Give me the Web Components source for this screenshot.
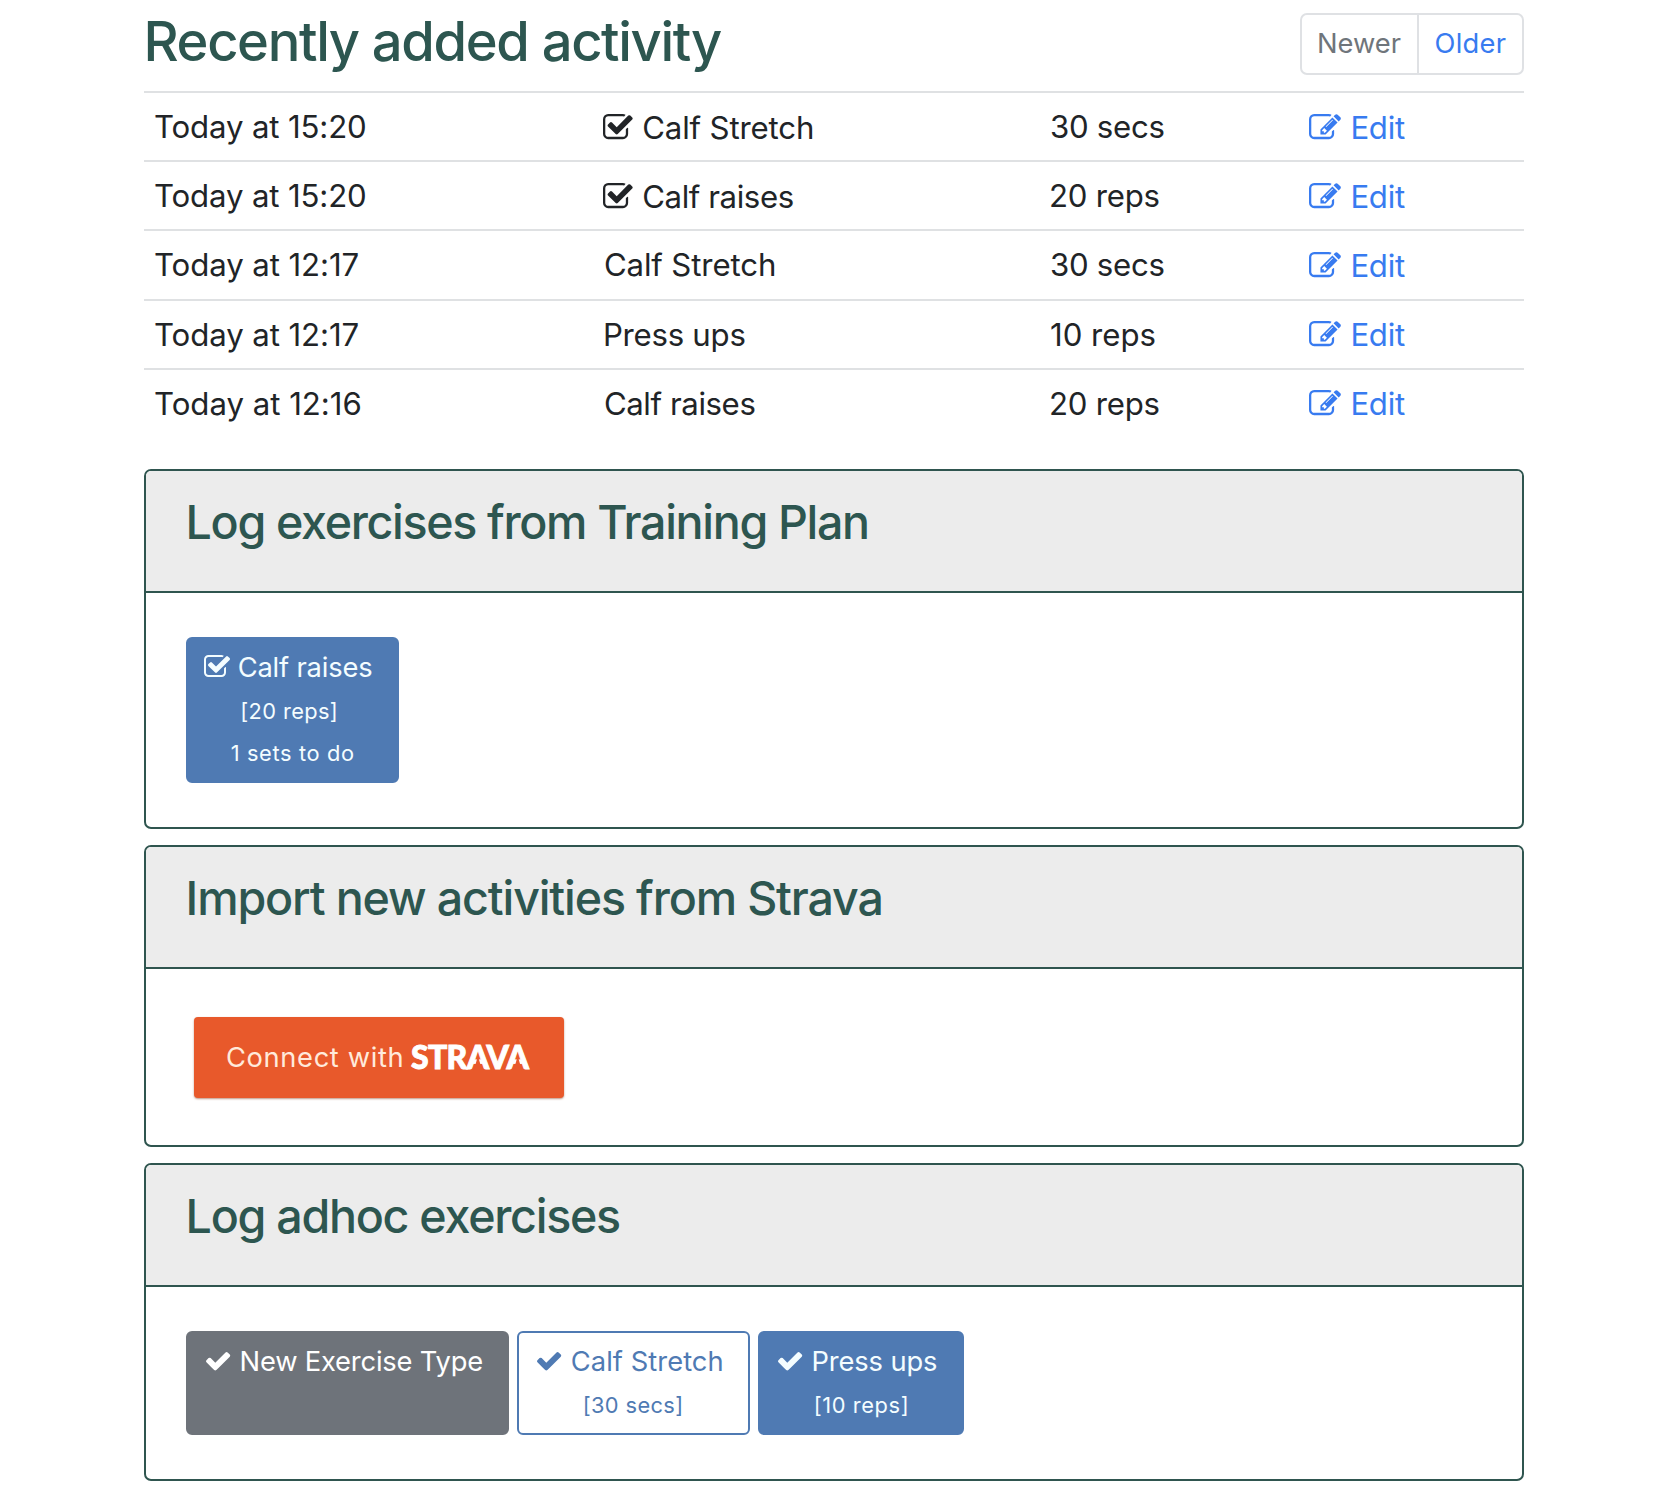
<!DOCTYPE html>
<html lang="en">
<head>
<meta charset="utf-8">
<title>Activity log</title>
<style>
  html, body { margin: 0; background: #fff; }
  body { font-family: Inter, "Liberation Sans", sans-serif; color: #212427; }
</style>
</head>
<body>
<activity-page></activity-page>

<script>
const pen = document.createElement('canvas').getContext('2d');

/* A single line of text tracked so that its ink spans a given width. */
class TrackedText extends HTMLElement {
  constructor() {
    super();
    this.attachShadow({ mode: 'open' }).innerHTML = `<style>:host { display: inline-block; white-space: nowrap; flex: none; } span { display: inline-block; }</style><span></span>`;
  }
  connectedCallback() {
    const text = this.getAttribute('text');
    const span = this.shadowRoot.querySelector('span');
    span.textContent = text;
    const cs = getComputedStyle(this);
    pen.font = `${cs.fontWeight} ${cs.fontSize} ${cs.fontFamily}`;
    const m = pen.measureText(text);
    const ink = m.actualBoundingBoxRight + m.actualBoundingBoxLeft;
    const w = parseFloat(this.getAttribute('ink'));
    this.style.width = w + 'px';
    span.style.letterSpacing = ((w - ink) / (text.length - 1)).toFixed(3) + 'px';
    span.style.marginLeft = m.actualBoundingBoxLeft.toFixed(2) + 'px';
  }
}

const ICONS = {
  'check-square': { box: [64, 128, 1664, 1408], d: 'M1472 930v318q0 119-84.5 203.5t-203.5 84.5h-832q-119 0-203.5-84.5t-84.5-203.5v-832q0-119 84.5-203.5t203.5-84.5h832q63 0 117 25 15 7 18 23 3 17-9 29l-49 49q-10 10-23 10-3 0-9-2-23-6-45-6h-832q-66 0-113 47t-47 113v832q0 66 47 113t113 47h832q66 0 113-47t47-113v-254q0-13 9-22l64-64q10-10 23-10 6 0 12 3 20 8 20 29zm231-489l-814 814q-24 24-57 24t-57-24l-430-430q-24-24-24-57t24-57l110-110q24-24 57-24t57 24l263 263 647-647q24-24 57-24t57 24l110 110q24 24 24 57t-24 57z' },
  'edit': { box: [0, 128, 1792, 1408], d: 'M888 1184l116-116-152-152-116 116v56h96v96h56zm440-720q-16-16-33 1l-350 350q-17 17-1 33t33-1l350-350q17-17 1-33zm80 594v190q0 119-84.5 203.5t-203.5 84.5h-832q-119 0-203.5-84.5t-84.5-203.5v-832q0-119 84.5-203.5t203.5-84.5h832q63 0 117 25 15 7 18 23 3 17-9 29l-49 49q-14 14-32 8-23-6-45-6h-832q-66 0-113 47t-47 113v832q0 66 47 113t113 47h832q66 0 113-47t47-113v-126q0-13 9-22l64-64q15-15 35-7t20 29zm-96-738l288 288-672 672h-288v-288zm444 132l-92 92-288-288 92-92q28-28 68-28t68 28l152 152q28 28 28 68t-28 68z' },
  'check': { box: [121, 334, 1550, 1202], d: 'M1671 566q0 40-28 68l-724 724-136 136q-28 28-68 28t-68-28l-136-136-362-362q-28-28-28-68t28-68l136-136q28-28 68-28t68 28l294 295 656-657q28-28 68-28t68 28l136 136q28 28 28 68z' }
};

class GlyphIcon extends HTMLElement {
  constructor() { super(); this.attachShadow({ mode: 'open' }); }
  connectedCallback() {
    const { box, d } = ICONS[this.getAttribute('name')];
    const k = parseFloat(this.getAttribute('em')) / 1792;
    this.shadowRoot.innerHTML = `
      <style>:host { display: inline-block; flex: none; } svg { display: inline-block; vertical-align: baseline; fill: currentColor; overflow: visible; }</style>
      <svg viewBox="${box.join(' ')}" width="${(box[2] * k).toFixed(2)}" height="${(box[3] * k).toFixed(2)}" aria-hidden="true"><path d="${d}"/></svg>`;
  }
}

class PagerNav extends HTMLElement {
  constructor() {
    super();
    this.attachShadow({ mode: 'open' }).innerHTML = `
      <style>
        :host { display: flex; box-sizing: border-box; width: 224px; height: 62px; border: 2px solid #dfe1e4; border-radius: 7px;
                font-size: 27.3px; line-height: 57px; }
        .p { box-sizing: border-box; padding-left: 17px; }
        .newer { width: 115px; color: #6f757b; }
        .older { flex: 1; color: #387bf0; border-left: 2px solid #dfe1e4; padding-left: 16.5px; }
      </style>
      <div class="p newer"><tracked-text text="Newer" ink="81.8"></tracked-text></div>
      <div class="p older"><tracked-text text="Older" ink="70.3"></tracked-text></div>`;
  }
}

class ActivityRow extends HTMLElement {
  constructor() { super(); this.attachShadow({ mode: 'open' }); }
  connectedCallback() {
    const a = n => this.getAttribute(n);
    const done = this.hasAttribute('done');
    this.shadowRoot.innerHTML = `
      <style>
        :host { display: grid; grid-template-columns: 449.5px 446.5px 259.5px 1fr; box-sizing: border-box; height: 69.25px;
                border-top: 2px solid #dfe1e3; font-size: 31.2px; line-height: 68.4px; }
        .c { display: flex; align-items: baseline; padding-left: 11px; height: 67px; box-sizing: border-box; }
        .low { padding-top: 1px; }
        :host(:nth-of-type(n+4)) .low { padding-top: 0; }
        .gap { gap: 10.2px; }
        .link { color: #387bf0; padding-left: 9.3px; gap: 11.6px; }
      </style>
      <div class="c"><tracked-text text="${a('when')}" ink="${a('wi')}"></tracked-text></div>
      <div class="c gap ${done ? 'low' : ''}" style="padding-left:${done ? 9.8 : 11.4}px">${done ? '<glyph-icon name="check-square" em="32"></glyph-icon>' : ''}<tracked-text text="${a('name')}" ink="${a('ni')}"></tracked-text></div>
      <div class="c"><tracked-text text="${a('amount')}" ink="${a('ai')}"></tracked-text></div>
      <div class="c link low"><glyph-icon name="edit" em="32"></glyph-icon><tracked-text text="Edit" ink="52.5"></tracked-text></div>`;
  }
}

class PanelCard extends HTMLElement {
  constructor() { super(); this.attachShadow({ mode: 'open' }); }
  connectedCallback() {
    this.shadowRoot.innerHTML = `
      <style>
        :host { display: flex; flex-direction: column; box-sizing: border-box; border: 2px solid #2f554f; border-radius: 7px; overflow: hidden; }
        header { box-sizing: border-box; height: 122px; background: #ececec; border-bottom: 2px solid #2f554f; padding-left: 42.6px;
                 color: #2d5650; font-size: 46.6px; font-weight: 500; line-height: 102.6px; }
        .body { flex: 1; display: flex; align-items: flex-start; gap: 8px; padding: 44px 40px; }
      </style>
      <header><tracked-text text="${this.getAttribute('heading')}" ink="${this.getAttribute('hi')}"></tracked-text></header>
      <div class="body"><slot></slot></div>`;
  }
}

class ExerciseButton extends HTMLElement {
  constructor() { super(); this.attachShadow({ mode: 'open' }); }
  connectedCallback() {
    const a = n => this.getAttribute(n);
    this.shadowRoot.innerHTML = `
      <style>
        :host { display: flex; flex-direction: column; box-sizing: border-box; padding-top: 5px; border: 2px solid #4f7ab3; border-radius: 6px;
                background: #4f7ab3; color: #f4fdff; font-size: 27.3px; line-height: 48px; }
        :host([kind=grey]) { background: #6e737a; border-color: #6e737a; color: #fff; }
        :host([kind=outline]) { background: #fff; color: #4f7ab3; }
        .t { display: flex; align-items: baseline; height: 46px; }
        ::slotted(div) { font-size: 21.8px; line-height: 42px; height: 42px; }
      </style>
      <div class="t" style="padding-left:${a('pad')}px;gap:${a('gap')}px"><glyph-icon name="${a('icon')}" em="28"></glyph-icon><tracked-text text="${a('label')}" ink="${a('li')}"></tracked-text></div>
      <slot></slot>`;
  }
}

class StravaButton extends HTMLElement {
  constructor() {
    super();
    this.attachShadow({ mode: 'open' }).innerHTML = `
      <style>
        :host { display: flex; align-items: baseline; box-sizing: border-box; width: 370px; height: 81px; margin: 4px 0 0 8px; padding-left: 33px;
                background: #e8592b; border-radius: 4px; box-shadow: 0 1px 2px rgba(150,80,50,.6); color: #ffeadb; line-height: 76px; }
        .a { font-size: 27.3px; }
        .b { font: 900 32px/76px Lato, sans-serif; color: #fff; -webkit-text-stroke: .9px #fff; margin-left: 8.5px; position: relative; top: 2.5px; }
        i { position: absolute; top: 36.5px; width: 9px; height: 15.5px; margin-left: -4.5px; background: #e8592b; clip-path: polygon(50% 0, 100% 100%, 0 100%); }
      </style>
      <tracked-text class="a" text="Connect with" ink="175.5"></tracked-text>
      <div class="b"><tracked-text text="STRAVA" ink="118.5"></tracked-text><i></i><i></i></div>`;
    /* Open wedges in place of the crossbars of the two As. */
    pen.font = '900 32px Lato, sans-serif';
    const m = pen.measureText('STRAVA');
    const ls = (118.5 - m.actualBoundingBoxLeft - m.actualBoundingBoxRight) / 5;
    const half = pen.measureText('A').width / 2;
    const [first, last] = this.shadowRoot.querySelectorAll('i');
    const at = (s, n) => (m.actualBoundingBoxLeft + pen.measureText(s).width - half + ls * n).toFixed(2) + 'px';
    first.style.left = at('STRA', 3);
    last.style.left = at('STRAVA', 5);
  }
}

class ActivityPage extends HTMLElement {
  constructor() {
    super();
    this.attachShadow({ mode: 'open' }).innerHTML = `
      <style>
        :host { display: flex; flex-direction: column; width: 1380px; margin-left: 144px; }
        .top { display: flex; justify-content: space-between; align-items: flex-start; height: 90.9px; }
        h3 { margin: 0 0 0 3.5px; color: #2d5650; font-size: 54.3px; font-weight: 500; line-height: 83.4px; }
        pager-nav { margin-top: 13px; }
        .rows { height: 378.1px; }
        .cards { display: flex; flex-direction: column; gap: 16px; }
      </style>
      <div class="top"><h3><tracked-text text="Recently added activity" ink="574.5"></tracked-text></h3><pager-nav></pager-nav></div>
      <div class="rows">
        <activity-row done when="Today at 15:20" wi="210" name="Calf Stretch" ni="169.8" amount="30 secs" ai="112.5"></activity-row>
        <activity-row done when="Today at 15:20" wi="210" name="Calf raises" ni="149.5" amount="20 reps" ai="107.5"></activity-row>
        <activity-row when="Today at 12:17" wi="203.5" name="Calf Stretch" ni="170" amount="30 secs" ai="112.5"></activity-row>
        <activity-row when="Today at 12:17" wi="203.5" name="Press ups" ni="139.5" amount="10 reps" ai="103.5"></activity-row>
        <activity-row when="Today at 12:16" wi="205.5" name="Calf raises" ni="149.5" amount="20 reps" ai="107.5"></activity-row>
      </div>
      <div class="cards">
        <panel-card style="height:360px" heading="Log exercises from Training Plan" hi="678.5">
          <exercise-button style="width:213px;height:146px" icon="check-square" pad="16" gap="8.7" label="Calf raises" li="133.5">
            <div style="padding-left:54.3px"><tracked-text text="[20 reps]" ink="93.5"></tracked-text></div>
            <div style="padding-left:43.7px"><tracked-text text="1 sets to do" ink="121.2"></tracked-text></div>
          </exercise-button>
        </panel-card>
        <panel-card style="height:302px" heading="Import new activities from Strava" hi="692.8">
          <strava-button></strava-button>
        </panel-card>
        <panel-card style="height:318px" heading="Log adhoc exercises" hi="430.5">
          <exercise-button kind="grey" style="width:323px;height:104px" icon="check" pad="18" gap="11.3" label="New Exercise Type" li="240.7"></exercise-button>
          <exercise-button kind="outline" style="width:233px;height:104px" icon="check" pad="18" gap="10.6" label="Calf Stretch" li="150.7">
            <div style="padding-left:65.7px"><tracked-text text="[30 secs]" ink="96.5"></tracked-text></div>
          </exercise-button>
          <exercise-button style="width:206px;height:104px" icon="check" pad="18" gap="11.2" label="Press ups" li="123.6">
            <div style="padding-left:55.7px"><tracked-text text="[10 reps]" ink="91"></tracked-text></div>
          </exercise-button>
        </panel-card>
      </div>`;
  }
}

customElements.define('tracked-text', TrackedText);
customElements.define('glyph-icon', GlyphIcon);
customElements.define('pager-nav', PagerNav);
customElements.define('activity-row', ActivityRow);
customElements.define('exercise-button', ExerciseButton);
customElements.define('strava-button', StravaButton);
customElements.define('panel-card', PanelCard);
customElements.define('activity-page', ActivityPage);
</script>
</body>
</html>
